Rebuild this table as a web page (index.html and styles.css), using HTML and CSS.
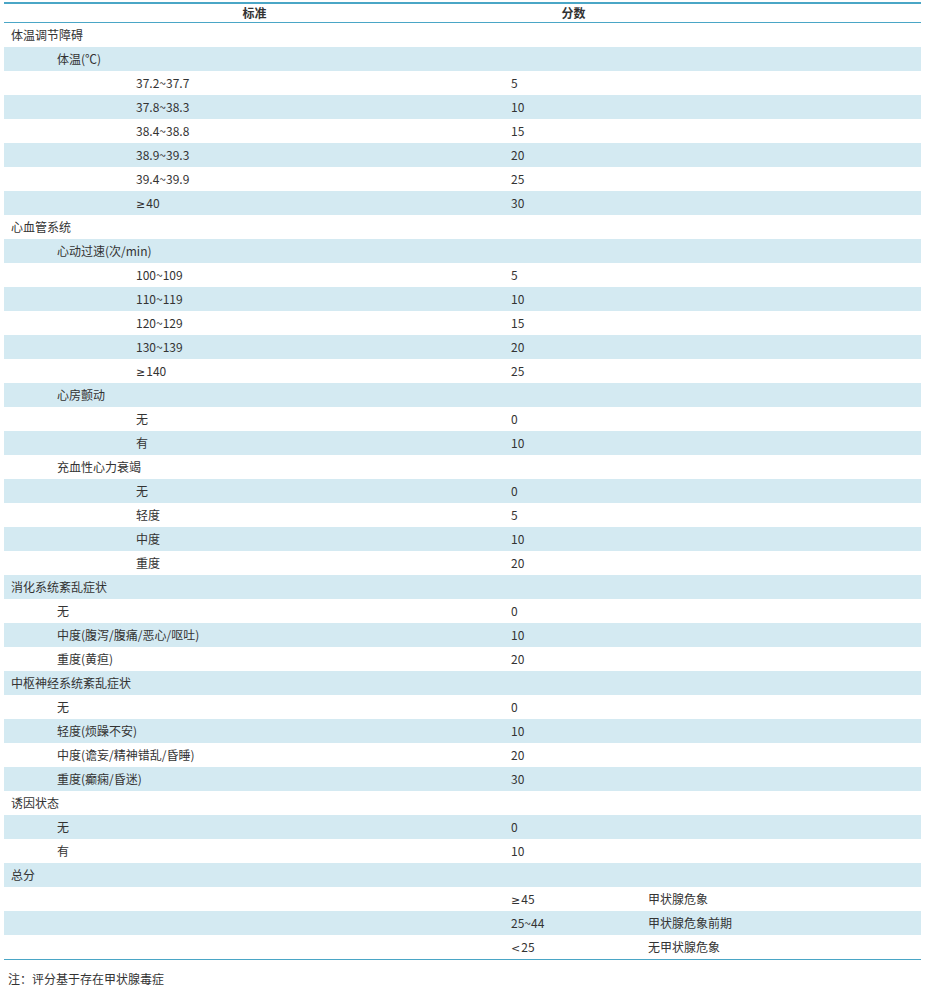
FILE: index.html
```html
<!DOCTYPE html>
<html lang="zh">
<head>
<meta charset="utf-8">
<link rel="stylesheet" href="styles.css">
</head>
<body>
<div class="wrap">
<table class="score">
<colgroup><col class="c1"><col class="c2"><col class="c3"></colgroup>
<thead>
<tr><th>标准</th><th>分数</th><th></th></tr>
</thead>
<tbody>
<tr><td class="l1">体温调节障碍</td><td></td><td></td></tr>
<tr><td class="l2">体温(℃)</td><td></td><td></td></tr>
<tr><td class="l3">37.2~37.7</td><td>5</td><td></td></tr>
<tr><td class="l3">37.8~38.3</td><td>10</td><td></td></tr>
<tr><td class="l3">38.4~38.8</td><td>15</td><td></td></tr>
<tr><td class="l3">38.9~39.3</td><td>20</td><td></td></tr>
<tr><td class="l3">39.4~39.9</td><td>25</td><td></td></tr>
<tr><td class="l3"><span class="sym">≥</span>40</td><td>30</td><td></td></tr>
<tr><td class="l1">心血管系统</td><td></td><td></td></tr>
<tr><td class="l2">心动过速(次/min)</td><td></td><td></td></tr>
<tr><td class="l3">100~109</td><td>5</td><td></td></tr>
<tr><td class="l3">110~119</td><td>10</td><td></td></tr>
<tr><td class="l3">120~129</td><td>15</td><td></td></tr>
<tr><td class="l3">130~139</td><td>20</td><td></td></tr>
<tr><td class="l3"><span class="sym">≥</span>140</td><td>25</td><td></td></tr>
<tr><td class="l2">心房颤动</td><td></td><td></td></tr>
<tr><td class="l3">无</td><td>0</td><td></td></tr>
<tr><td class="l3">有</td><td>10</td><td></td></tr>
<tr><td class="l2">充血性心力衰竭</td><td></td><td></td></tr>
<tr><td class="l3">无</td><td>0</td><td></td></tr>
<tr><td class="l3">轻度</td><td>5</td><td></td></tr>
<tr><td class="l3">中度</td><td>10</td><td></td></tr>
<tr><td class="l3">重度</td><td>20</td><td></td></tr>
<tr><td class="l1">消化系统紊乱症状</td><td></td><td></td></tr>
<tr><td class="l2">无</td><td>0</td><td></td></tr>
<tr><td class="l2">中度(腹泻/腹痛/恶心/呕吐)</td><td>10</td><td></td></tr>
<tr><td class="l2">重度(黄疸)</td><td>20</td><td></td></tr>
<tr><td class="l1">中枢神经系统紊乱症状</td><td></td><td></td></tr>
<tr><td class="l2">无</td><td>0</td><td></td></tr>
<tr><td class="l2">轻度(烦躁不安)</td><td>10</td><td></td></tr>
<tr><td class="l2">中度(谵妄/精神错乱/昏睡)</td><td>20</td><td></td></tr>
<tr><td class="l2">重度(癫痫/昏迷)</td><td>30</td><td></td></tr>
<tr><td class="l1">诱因状态</td><td></td><td></td></tr>
<tr><td class="l2">无</td><td>0</td><td></td></tr>
<tr><td class="l2">有</td><td>10</td><td></td></tr>
<tr><td class="l1">总分</td><td></td><td></td></tr>
<tr><td></td><td><span class="sym">≥</span>45</td><td>甲状腺危象</td></tr>
<tr><td></td><td>25~44</td><td>甲状腺危象前期</td></tr>
<tr><td></td><td><span class="sym">&lt;</span>25</td><td>无甲状腺危象</td></tr>
</tbody>
</table>
<p class="note">注：评分基于存在甲状腺毒症</p>
</div>
</body>
</html>
```
FILE: styles.css
```css
html, body {
  margin: 0;
  padding: 0;
  background: #fff;
}
.wrap {
  padding: 2px 4px 0 4px;
  font-family: "Noto Sans CJK SC", "Noto Sans", sans-serif;
  font-size: 12px;
  color: #333;
}
.score {
  width: 917px;
  border-collapse: collapse;
  table-layout: fixed;
  border-top: 2px solid #4aa6c6;
  border-bottom: 1px solid #4aa6c6;
}
.c1 { width: 501px; }
.c2 { width: 137px; }
.c3 { width: 279px; }
.score th {
  height: 18px;
  padding: 0;
  font-weight: bold;
  text-align: center;
  line-height: 18px;
  border-bottom: 1px solid #4aa6c6;
}
.score td {
  height: 24px;
  padding: 0 0 0 6px;
  line-height: 24px;
  vertical-align: middle;
  white-space: nowrap;
}
.score tbody tr:nth-child(even) td {
  background: #d4eaf2;
}
.score td.l1 { padding-left: 7px; }
.score td.l2 { padding-left: 53px; }
.score td.l3 { padding-left: 132px; }
.sym {
  font-family: "DejaVu Sans", sans-serif;
  font-size: 11px;
  line-height: 0;
  margin-right: 1px;
}
.note {
  margin: 10px 0 0 4px;
  line-height: 18px;
}
```
